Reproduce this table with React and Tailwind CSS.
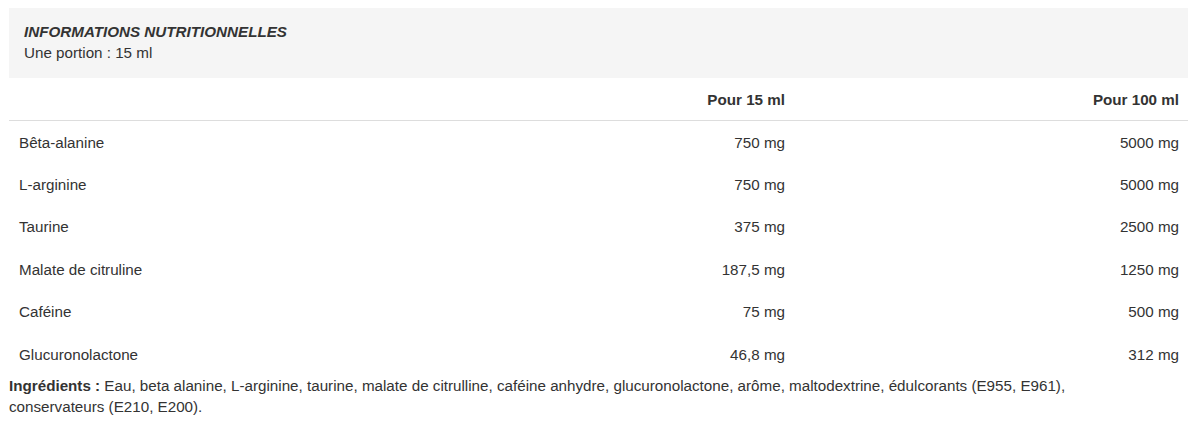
const rows = [
  ["Bêta-alanine", "750 mg", "5000 mg"],
  ["L-arginine", "750 mg", "5000 mg"],
  ["Taurine", "375 mg", "2500 mg"],
  ["Malate de citruline", "187,5 mg", "1250 mg"],
  ["Caféine", "75 mg", "500 mg"],
  ["Glucuronolactone", "46,8 mg", "312 mg"],
];

export default function App() {
  return (
    <div className="bg-white w-[1188px] h-[422px] pt-[8px] pl-[9px] text-[#333333] font-['Liberation_Sans',Arial,sans-serif]">
      <div className="bg-[#f5f5f5] px-[15px] pt-[13px] pb-[15px]">
        <p className="text-[15.2px] leading-[21px] font-bold italic uppercase">
          Informations nutritionnelles
        </p>
        <p className="text-[15.2px] leading-[21px]">Une portion : 15 ml</p>
      </div>

      <table className="w-full table-fixed border-collapse text-[15.2px] leading-[18px]">
        <thead>
          <tr className="border-b border-[#dddddd]">
            <th className="h-[42px]" />
            <th className="h-[42px] pt-[2px] px-[10px] text-right font-bold">Pour 15 ml</th>
            <th className="h-[42px] pt-[2px] px-[9px] text-right font-bold">Pour 100 ml</th>
          </tr>
        </thead>
        <tbody>
          {rows.map((r) => (
            <tr key={r[0]}>
              <td className="h-[42.5px] pt-[2px] px-[10px] text-left">{r[0]}</td>
              <td className="h-[42.5px] pt-[2px] px-[10px] text-right">{r[1]}</td>
              <td className="h-[42.5px] pt-[2px] px-[9px] text-right">{r[2]}</td>
            </tr>
          ))}
        </tbody>
      </table>

      <p className="text-[15.2px] leading-[21px] pr-[9px]">
        <span className="font-bold">Ingrédients :</span> Eau, beta alanine, L-arginine, taurine,
        malate de citrulline, caféine anhydre, glucuronolactone, arôme, maltodextrine, édulcorants
        (E955, E961),
        <br />
        conservateurs (E210, E200).
      </p>
    </div>
  );
}
